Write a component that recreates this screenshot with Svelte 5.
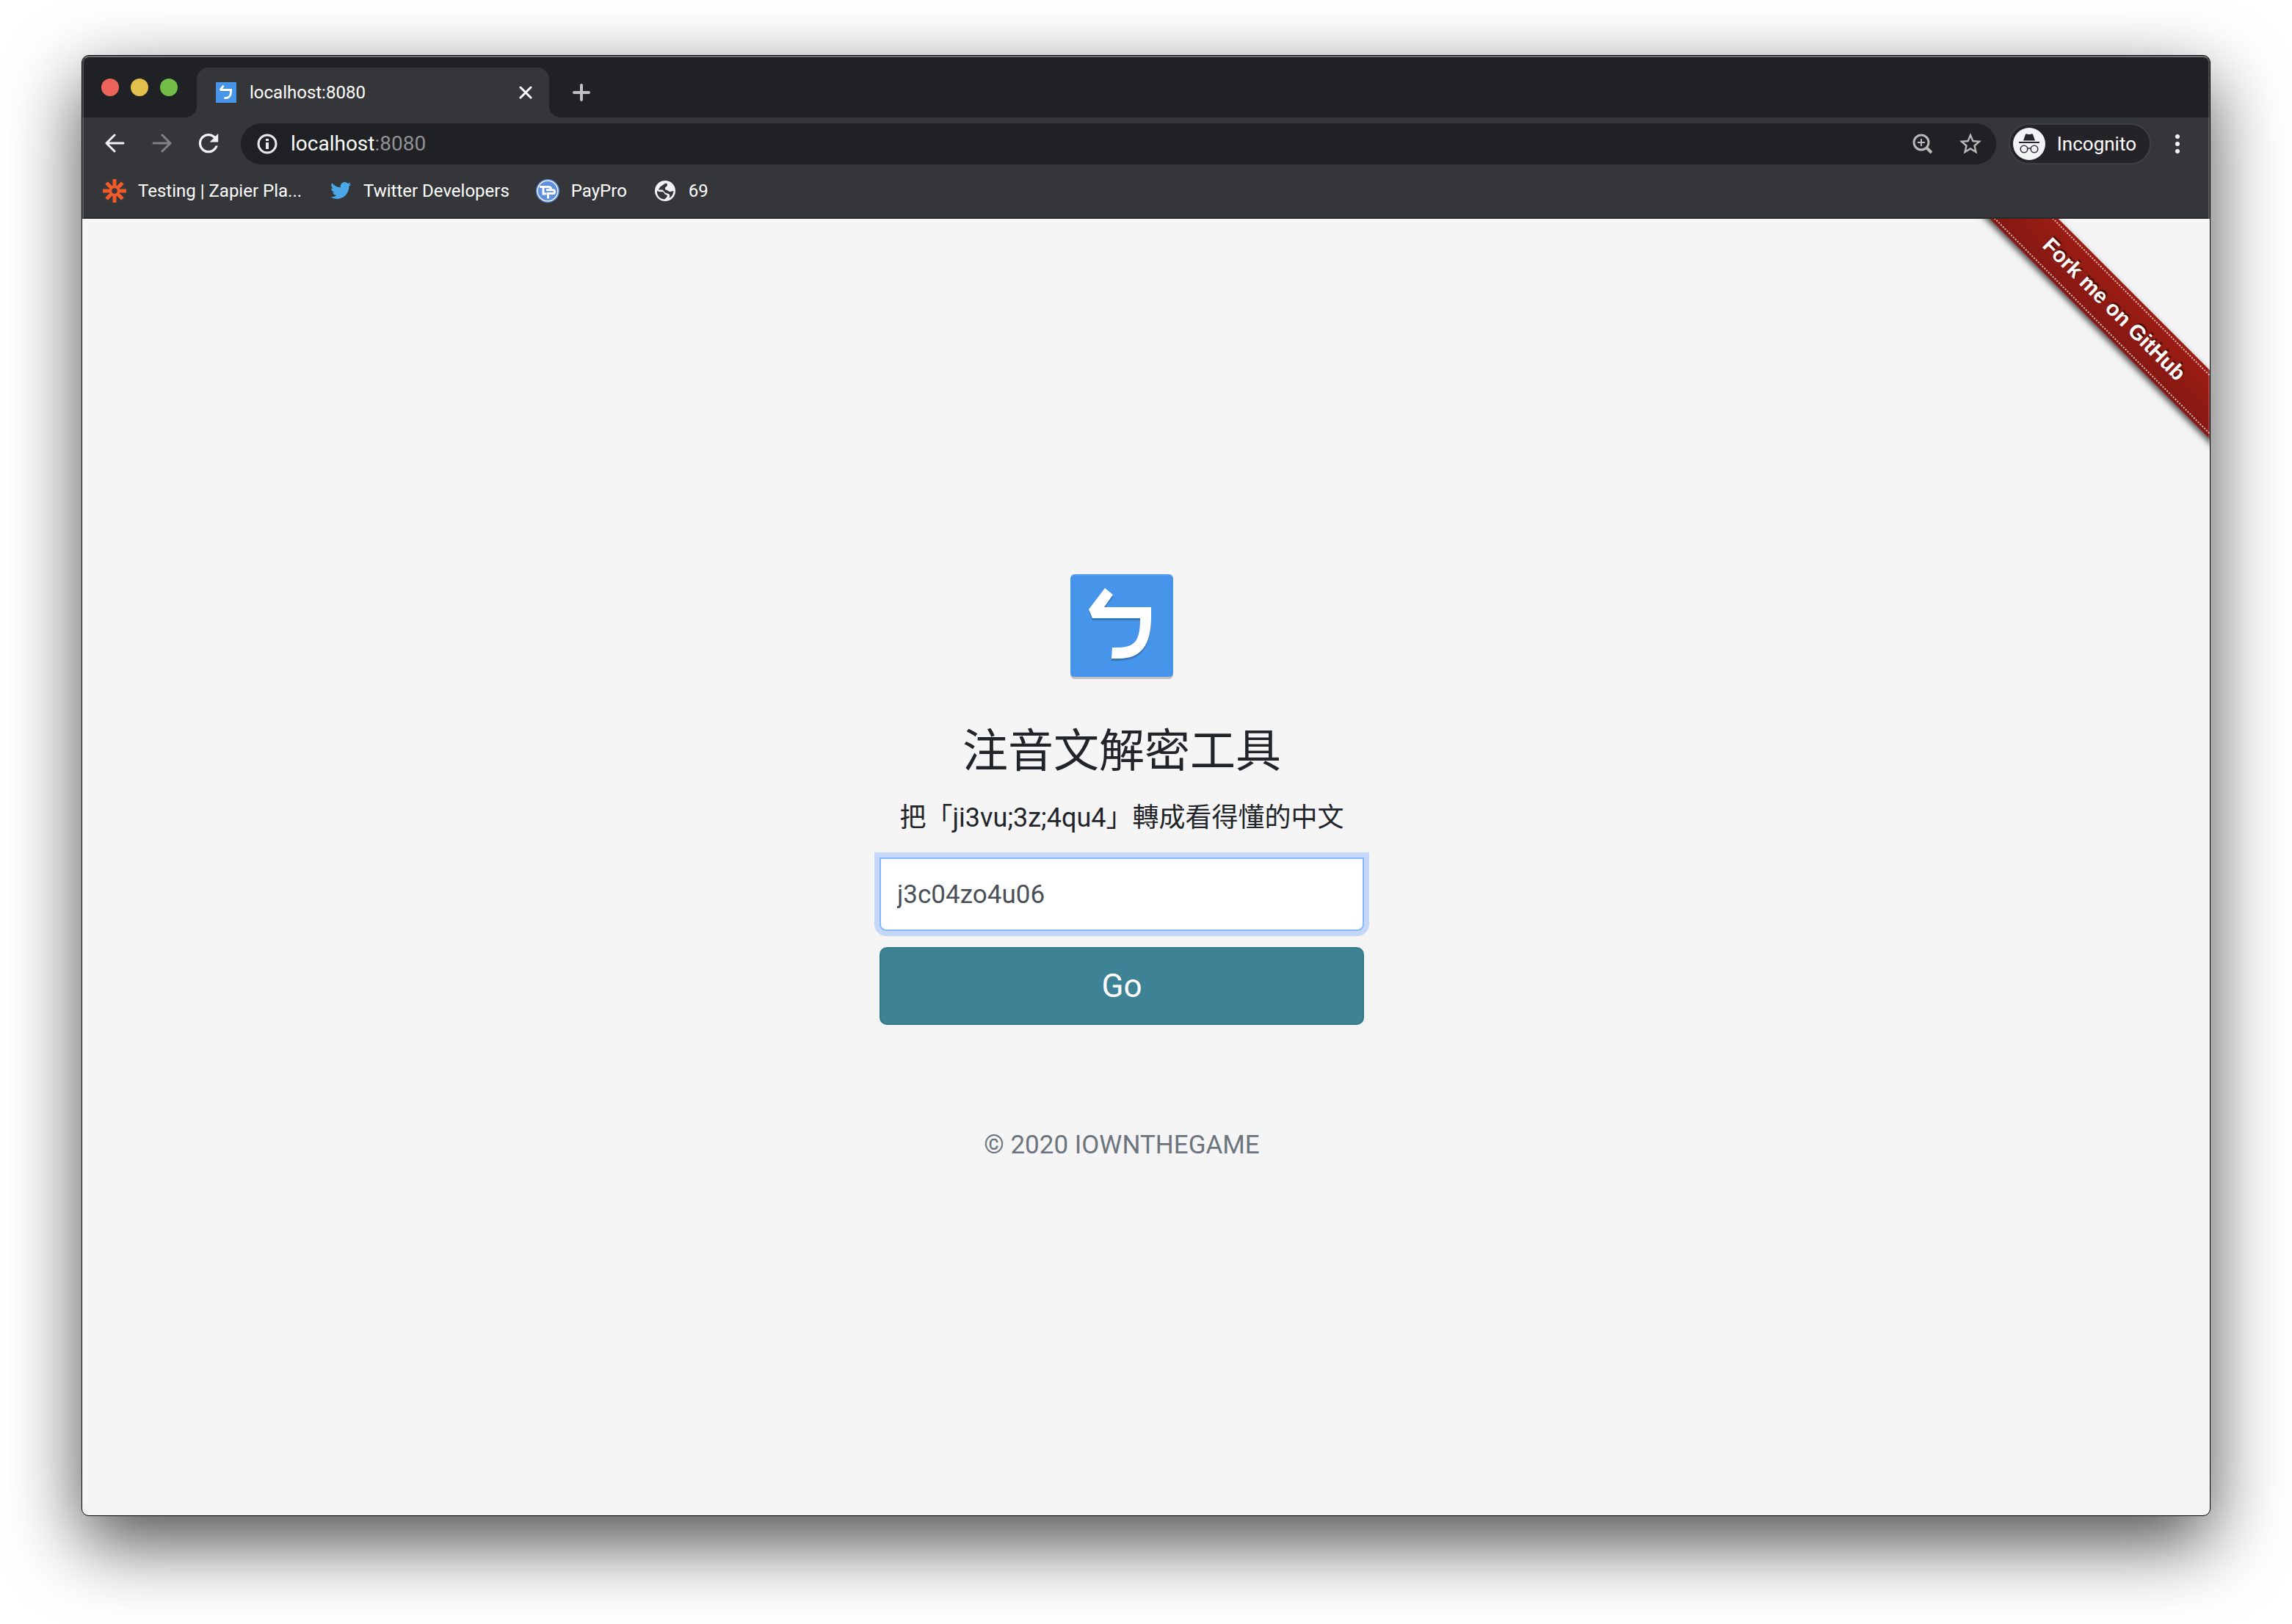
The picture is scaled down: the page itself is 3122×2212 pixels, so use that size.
<script>
  let query = $state('j3c04zo4u06');
</script>

{#snippet bopomofo()}
  <svg class="tile" viewBox="0 0 140 143" aria-hidden="true">
    <rect y="3" width="140" height="140" rx="6" fill="#c3c1c3" />
    <rect width="140" height="140" rx="6" fill="#5da2ef" />
    <path d="M0 8Q0 2 6 2H134Q140 2 140 8V134Q140 140 134 140H6Q0 140 0 134Z" fill="#4795eb" />
    <path transform="translate(0 3)" fill="#3977bd" d="M47 19L58 28L46 45H110V58C110 96 97 115 66 115H56L57 100H63C89 100 95 90 95 60H30L25 48Z" />
    <path fill="#fff" d="M47 19L58 28L46 45H110V58C110 96 97 115 66 115H56L57 100H63C89 100 95 90 95 60H30L25 48Z" />
  </svg>
{/snippet}

<div class="desktop">
  <div class="window">
    <header class="chrome">
      <div class="tabstrip">
        <div class="lights">
          <button class="light close" aria-label="Close window"></button>
          <button class="light minimise" aria-label="Minimise window"></button>
          <button class="light maximise" aria-label="Maximise window"></button>
        </div>
        <div class="tab">
          <span class="favicon">{@render bopomofo()}</span>
          <span class="tab-title">localhost:8080</span>
          <button class="icon-button" aria-label="Close tab">
            <svg width="18" height="18" viewBox="0 0 18 18" fill="none" stroke="#fff" stroke-width="3" stroke-linecap="round"><path d="M2 2L16 16M16 2L2 16" /></svg>
          </button>
        </div>
        <button class="icon-button new-tab" aria-label="New tab">
          <svg width="24" height="24" viewBox="0 0 24 24" fill="none" stroke="#bdc1c6" stroke-width="4" stroke-linecap="round"><path d="M2 12H22M12 2V22" /></svg>
        </button>
      </div>

      <nav class="toolbar" aria-label="Browser toolbar">
        <div class="nav-buttons">
          <button class="icon-button" aria-label="Back">
            <svg width="28" height="28" viewBox="0 0 28 28" fill="none" stroke="#f1f3f4" stroke-width="3" stroke-linecap="round" stroke-linejoin="round"><path d="M26 13H3M14 2L3 13L14 24" /></svg>
          </button>
          <button class="icon-button" aria-label="Forward">
            <svg width="28" height="28" viewBox="0 0 28 28" fill="none" stroke="#808184" stroke-width="3" stroke-linecap="round" stroke-linejoin="round"><path d="M3 13H26M15 2L26 13L15 24" /></svg>
          </button>
          <button class="icon-button" aria-label="Reload">
            <svg width="28" height="28" viewBox="3.500 4 17 17" fill="#f1f3f4"><path d="M17.65 6.35C16.2 4.9 14.21 4 12 4c-4.42 0-7.99 3.58-7.99 8s3.57 8 7.99 8c3.73 0 6.84-2.55 7.73-6h-2.08c-.82 2.33-3.04 4-5.65 4-3.31 0-6-2.69-6-6s2.69-6 6-6c1.66 0 3.14.69 4.22 1.78L13 11h7V4l-2.35 2.35z" /></svg>
          </button>
        </div>
        <div class="omnibox">
          <svg width="28" height="28" viewBox="0 0 28 28" aria-hidden="true"><circle cx="14" cy="14" r="12" fill="none" stroke="#e8eaed" stroke-width="3" /><path d="M12 7h4v3h-4zM12 12h4v9h-4z" fill="#e8eaed" /></svg>
          <span class="url">localhost<span class="port">:8080</span></span>
          <button class="icon-button" aria-label="Zoom">
            <svg width="28" height="28" viewBox="0 0 28 28" fill="none" stroke="#b8b8b8"><circle cx="12" cy="12" r="10" stroke-width="3" /><path d="M19 19L26 26" stroke-width="4" /><path d="M7 12H17M12 7V17" stroke-width="2" /></svg>
          </button>
          <button class="icon-button" aria-label="Bookmark this page">
            <svg width="30" height="30" viewBox="2 2 20 20" fill="#b8b8b8"><path d="M22 9.24l-7.19-.62L12 2 9.19 8.63 2 9.24l5.46 4.73L5.82 21 12 17.27 18.18 21l-1.63-7.03L22 9.24zM12 15.4l-3.76 2.27 1-4.28-3.32-2.88 4.38-.38L12 6.1l1.71 4.04 4.38.38-3.32 2.88 1 4.28L12 15.4z" /></svg>
          </button>
        </div>
        <button class="profile">
          <svg width="44" height="44" viewBox="0 0 44 44" aria-hidden="true">
            <circle cx="22" cy="22" r="22" fill="#f1f3f4" />
            <path d="M8 19H36V21H8zM14 17.5L17 9Q17.500 8 19 8.500Q22 9.600 25 8.500Q26.500 8 27 9L30 17.500Z" fill="#27272b" />
            <g fill="none" stroke="#35363a" stroke-width="1.600"><circle cx="15" cy="29" r="4.800" /><circle cx="29" cy="29" r="4.800" /><path d="M19.800 28.500Q22 27 24.200 28.500" /></g>
          </svg>
          <span>Incognito</span>
        </button>
        <button class="icon-button menu" aria-label="Browser menu">
          <svg width="8" height="28" viewBox="0 0 8 28" fill="#f1f3f4"><circle cx="4" cy="4" r="3" /><circle cx="4" cy="14" r="3" /><circle cx="4" cy="24" r="3" /></svg>
        </button>
      </nav>

      <nav class="bookmarks" aria-label="Bookmarks">
        <a href="#zapier">
          <svg width="32" height="32" viewBox="0 0 32 32" fill="none" stroke="#f05a28" stroke-width="5"><path d="M16 0V12M16 20V32M0 16H12M20 16H32M5 5L13 13M19 19L27 27M27 5L19 13M13 19L5 27" /><circle cx="16" cy="16" r="5.500" stroke-width="3.500" /></svg>
          <span>Testing | Zapier Pla...</span>
        </a>
        <a href="#twitter">
          <svg width="32" height="32" viewBox="-2.700 -1.300 27.400 27.400" fill="#4ba9e8"><path d="M23.950 4.570a10 10 0 0 1-2.820.770 4.960 4.960 0 0 0 2.160-2.720c-.950.550-2 .950-3.130 1.180a4.920 4.920 0 0 0-8.380 4.480C7.690 8.090 4.070 6.130 1.640 3.160a4.920 4.920 0 0 0 1.520 6.570 4.900 4.900 0 0 1-2.230-.610v.060a4.920 4.920 0 0 0 3.950 4.830 5 5 0 0 1-2.210.080 4.940 4.940 0 0 0 4.600 3.420A9.870 9.870 0 0 1 0 19.540a13.990 13.990 0 0 0 7.550 2.210c9.050 0 14-7.500 14-13.980 0-.210 0-.420-.020-.630a9.940 9.940 0 0 0 2.460-2.550z" /></svg>
          <span>Twitter Developers</span>
        </a>
        <a href="#paypro">
          <svg width="32" height="32" viewBox="0 0 32 32"><circle cx="16" cy="16" r="16" fill="#5f8fe0" /><circle cx="16" cy="16" r="13.800" fill="none" stroke="#fff" stroke-width="1.200" /><g fill="none" stroke="#fff" stroke-width="3"><path d="M5 10.500H17Q20.500 10.500 20.500 13.500M10 10V20H14.500" /><path d="M14 14.800H23Q25.500 14.800 25.500 17.200Q25.500 19.600 23 19.600H16.500V26.500" /></g></svg>
          <span>PayPro</span>
        </a>
        <a href="#69">
          <svg width="32" height="32" viewBox="-2 -2 32 32"><circle cx="14" cy="14" r="14" fill="#f1f3f4" /><path d="M3 14Q8 16 10.500 15Q13 16 13.500 18.500L17 20Q17 22.500 13 25.500Q5 25 3 17ZM11 6Q13 3.500 16 3.500Q17 4 17 7L14 9.500V12L17.500 13.500Q20 16 23 14.500L25.500 14Q25 21 19.500 24Q21 21 19.500 18.500L14 16.500Q13 15.500 10.500 12.500L5 12.500Q6 8.500 11 6Z" fill="#35363a" /></svg>
          <span>69</span>
        </a>
      </nav>
    </header>

    <main class="page">
      <div class="ribbon-corner">
        <a class="ribbon" href="#fork"><span>Fork me on GitHub</span></a>
      </div>
      <form class="decoder" onsubmit={(event) => event.preventDefault()}>
        <div class="logo">{@render bopomofo()}</div>
        <h1>注音文解密工具</h1>
        <label for="query">把「ji3vu;3z;4qu4」轉成看得懂的中文</label>
        <input id="query" type="text" autocomplete="off" bind:value={query} />
        <button class="go" type="submit">Go</button>
        <p>© 2020 IOWNTHEGAME</p>
      </form>
    </main>
  </div>
</div>

<style>
  :global(body) {
    margin: 0;
    background: #fff;
  }

  .desktop {
    box-sizing: border-box;
    min-height: 100vh;
    display: flex;
    padding: 75px 111px 147px;
    overflow: hidden;
    font-family: Roboto, 'Noto Sans CJK TC', sans-serif;
  }

  .desktop :is(button, input) {
    font-family: inherit;
  }

  .desktop svg {
    display: block;
    flex: none;
  }

  .window {
    position: relative;
    flex: 1;
    min-width: 0;
    display: flex;
    flex-direction: column;
    border: 1px solid #000;
    border-radius: 10px;
    background: #f5f5f5;
    box-shadow: 0 36px 100px rgba(0, 0, 0, 0.7);
    overflow: hidden;
  }

  /* Light bevel along the window's rim */
  .window::after {
    content: '';
    position: absolute;
    inset: 0;
    border: 2px solid rgba(255, 255, 255, 0.2);
    border-top-color: rgba(255, 255, 255, 0.36);
    border-bottom: 0;
    border-radius: 9px;
    pointer-events: none;
  }

  .chrome {
    background: #35363a;
    border-bottom: 2px solid #27282b;
    color: #fff;
    font-size: 24px;
    line-height: 32px;
  }

  .icon-button {
    padding: 0;
    border: 0;
    background: none;
  }

  .tabstrip {
    display: flex;
    height: 84px;
    background: #202124;
  }

  .lights {
    display: flex;
    gap: 16px;
    padding: 31px 26px 0;
  }

  .light {
    width: 24px;
    height: 24px;
    padding: 0;
    border: 0;
    border-radius: 50%;
  }

  .close {
    background: #ed655a;
  }

  .minimise {
    background: #e1c04c;
  }

  .maximise {
    background: #72be47;
  }

  .tab {
    position: relative;
    box-sizing: border-box;
    width: 480px;
    height: 68px;
    margin-top: 16px;
    padding: 0 23px 0 26px;
    display: flex;
    align-items: center;
    gap: 18px;
    border-radius: 16px 16px 0 0;
    background: #35363a;
  }

  .tab::before,
  .tab::after {
    content: '';
    position: absolute;
    bottom: 0;
    width: 16px;
    height: 16px;
  }

  .tab::before {
    right: 100%;
    background: radial-gradient(circle at 0 0, #202124 16px, #35363a 16px);
  }

  .tab::after {
    left: 100%;
    background: radial-gradient(circle at 100% 0, #202124 16px, #35363a 16px);
  }

  .favicon {
    width: 28px;
  }

  .tab-title {
    flex: 1;
  }

  .new-tab {
    margin: 16px 0 0 32px;
  }

  .toolbar {
    display: flex;
    align-items: center;
    padding: 8px 40px 0 30px;
  }

  .nav-buttons {
    display: flex;
    gap: 36px;
  }

  .omnibox {
    flex: 1;
    box-sizing: border-box;
    height: 56px;
    margin-left: 30px;
    padding: 0 20px 0 22px;
    display: flex;
    align-items: center;
    gap: 36px;
    border-radius: 28px;
    background: #202124;
    font-size: 28px;
  }

  .url {
    flex: 1;
    margin-left: -18px;
  }

  .port {
    color: #909193;
  }

  .profile {
    box-sizing: border-box;
    height: 56px;
    margin-left: 17px;
    padding: 0 18px 0 4px;
    display: flex;
    align-items: center;
    gap: 16px;
    border: 2px solid #3f3f44;
    border-radius: 28px;
    background: #242328;
    color: #fff;
    font-size: 26px;
  }

  .menu {
    margin-left: 32px;
  }

  .bookmarks {
    display: flex;
    align-items: center;
    gap: 36px;
    height: 72px;
    padding: 0 28px;
  }

  .bookmarks a {
    display: flex;
    align-items: center;
    gap: 16px;
    color: #fff;
    text-decoration: none;
  }

  .page {
    position: relative;
    flex: 1;
    display: flex;
    align-items: center;
    justify-content: center;
    padding: 6px 66px 0 0;
    overflow: hidden;
  }

  .ribbon-corner {
    position: absolute;
    top: 0;
    right: 0;
    width: 330px;
    height: 330px;
    overflow: hidden;
  }

  .ribbon {
    position: absolute;
    top: 90px;
    right: -120px;
    width: 500px;
    height: 66px;
    display: flex;
    align-items: center;
    justify-content: center;
    transform: rotate(45deg);
    background: linear-gradient(#9d1d14, #841812);
    box-shadow: 0 4px 8px rgba(0, 0, 0, 0.7);
    color: #fff;
    font: bold 29px/32px 'Liberation Sans', sans-serif;
    text-decoration: none;
    text-shadow: 0 -3px 1px rgba(0, 0, 0, 0.5);
  }

  .ribbon::after {
    content: '';
    position: absolute;
    inset: 4px -4px;
    border: 2px dotted rgba(255, 255, 255, 0.7);
  }

  .decoder {
    width: 660px;
    display: flex;
    flex-direction: column;
    text-align: center;
    color: #212529;
  }

  .logo {
    width: 140px;
    margin: 0 auto 62px;
  }

  h1 {
    margin: 0 0 27px;
    font-size: 62px;
    line-height: 74px;
    font-weight: 400;
  }

  label {
    margin-bottom: 28px;
    font-size: 36px;
    line-height: 52px;
  }

  input {
    box-sizing: border-box;
    width: 100%;
    height: 100px;
    padding: 0 22px;
    border: 2px solid #86b9fc;
    border-radius: 0 0 9px 9px;
    outline: 0;
    background: #fff;
    box-shadow: 0 0 0 7px #c4d7f8;
    color: #495057;
    font-size: 35px;
  }

  .go {
    height: 106px;
    margin-top: 22px;
    border: 2px solid #36798a;
    border-radius: 10px;
    background: #3d8295;
    color: #fff;
    font-size: 44px;
  }

  p {
    margin: 138px 0 0;
    color: #6c757d;
    font-size: 35px;
    line-height: 52px;
  }
</style>
